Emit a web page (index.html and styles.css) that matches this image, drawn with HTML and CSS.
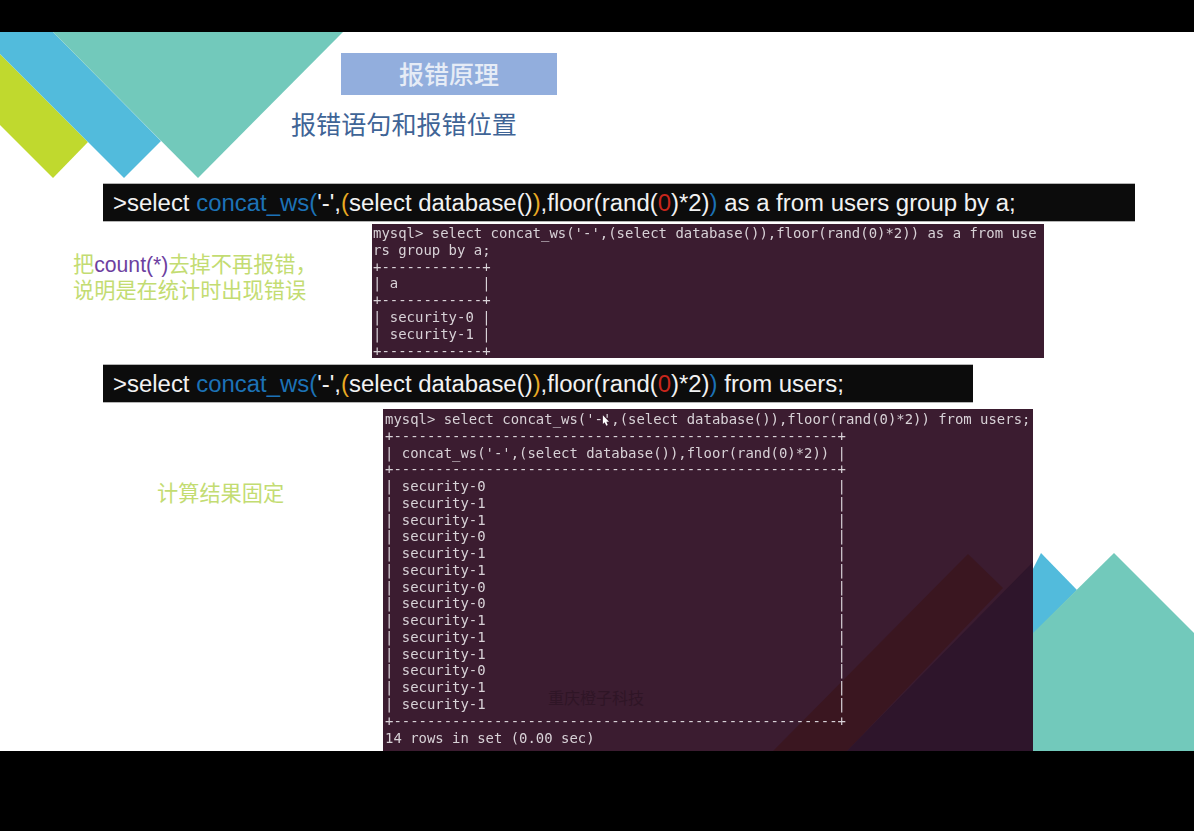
FILE: index.html
```html
<!DOCTYPE html>
<html lang="zh">
<head>
<meta charset="utf-8">
<title>报错原理</title>
<link rel="stylesheet" href="styles.css">
</head>
<body>
<main class="slide">
<svg class="decor" viewBox="0 0 1194 719" aria-hidden="true">
<polygon class="d-green" points="0,22 88,110 53,146 0,93"/>
<polygon class="d-blue" points="0,0 53,0 161,109 124,146 0,22"/>
<polygon class="d-teal" points="53,0 343,0 198,146"/>
<polygon class="d-blue" points="1041,521 1077,558 1033,602 1000,602"/>
<polygon class="d-teal" points="1114,521 1194,601 1194,719 1033,719 1033,601"/>
</svg>
<div class="title-box">报错原理</div>
<h2 class="subtitle">报错语句和报错位置</h2>
<div class="bar bar-one">&gt;select <span class="c-blue">concat_ws(</span>'-',<span class="c-orange">(</span>select database()<span class="c-orange">)</span>,floor(rand(<span class="c-red">0</span>)*2)<span class="c-blue">)</span> as a from users group by a;</div>
<section class="row row-one">
<p class="note note-one">把<span class="c-purple">count(*)</span>去掉不再报错，<br>说明是在统计时出现错误</p>
<pre class="term term-one">mysql&gt; select concat_ws('-',(select database()),floor(rand(0)*2)) as a from use
rs group by a;
+------------+
| a          |
+------------+
| security-0 |
| security-1 |
+------------+</pre>
</section>
<div class="bar bar-two">&gt;select <span class="c-blue">concat_ws(</span>'-',<span class="c-orange">(</span>select database()<span class="c-orange">)</span>,floor(rand(<span class="c-red">0</span>)*2)<span class="c-blue">)</span> from users;</div>
<section class="row row-two">
<p class="note note-two">计算结果固定</p>
<div class="term-wrap">
<svg class="term-shade" viewBox="0 0 650 342" aria-hidden="true">
<polygon class="s-red" points="585,145 620,179 464,342 390,342"/>
<polygon class="s-purple" points="650,153 650,342 464,342"/>
</svg>
<pre class="term term-two">mysql&gt; select concat_ws('-',(select database()),floor(rand(0)*2)) from users;
+-----------------------------------------------------+
| concat_ws('-',(select database()),floor(rand(0)*2)) |
+-----------------------------------------------------+
| security-0                                          |
| security-1                                          |
| security-1                                          |
| security-0                                          |
| security-1                                          |
| security-1                                          |
| security-0                                          |
| security-0                                          |
| security-1                                          |
| security-1                                          |
| security-1                                          |
| security-0                                          |
| security-1                                          |
| security-1                                          |
+-----------------------------------------------------+
14 rows in set (0.00 sec)</pre>
<svg class="cursor" viewBox="0 0 8 12" aria-hidden="true"><path d="M1 0 L1 10 L3 8 L5 12 L6.5 11 L5 7.5 L8 7.5 Z"/></svg>
<span class="watermark">重庆橙子科技</span>
</div>
</section>
</main>
</body>
</html>
```
FILE: styles.css
```css
* { box-sizing: border-box; }
html, body { margin: 0; padding: 0; background: #000; }
body { height: 831px; overflow: hidden; padding-top: 32px; font-family: "Noto Sans CJK SC", "Noto Sans", sans-serif; }
.slide { position: relative; height: 719px; background: #fff; overflow: hidden; }
.decor { position: absolute; left: 0; top: 0; width: 1194px; height: 719px; }
.d-green { fill: #c0d92e; }
.d-blue { fill: #52bbdc; }
.d-teal { fill: #72c9bb; }

.title-box, .subtitle, .bar, .row { position: relative; }
.title-box { width: 216px; height: 42px; margin: 21px 0 0 341px; background: #92aedd; color: #e6ecf6; font-size: 25px; font-weight: 500; line-height: 40px; text-align: center; }
.subtitle { margin: 0 0 42px 291px; padding-top: 10px; height: 46px; font-size: 25.1px; font-weight: 400; line-height: 36px; color: #3f6496; }

.bar { height: 39px; background: #0c0c0c; border-top: 1px solid #b5b5b5; border-bottom: 1px solid #b5b5b5; margin-left: 103px; padding-left: 10px; color: #f2f2f2; font-family: "Liberation Sans", Arial, sans-serif; font-size: 23.95px; line-height: 37px; white-space: pre; }
.bar-one { width: 1032px; }
.bar-two { width: 870px; margin-top: 6px; }
.c-blue { color: #1c72b6; }
.c-orange { color: #e9aa23; }
.c-red { color: #c8261c; }
.c-purple { color: #6d3fa0; font-family: "Liberation Sans", Arial, sans-serif; line-height: 1; }

.row { display: flex; align-items: flex-start; }
.row-one { margin-top: 2px; margin-left: 73px; }
.row-two { margin-top: 6px; margin-left: 157px; }
.note { margin: 0; flex: none; color: #c3dc72; font-size: 21.2px; line-height: 26px; white-space: pre; }
.note-one { width: 299px; margin-top: 26px; }
.note-two { width: 226px; margin-top: 70px; }

.term { margin: 0; background: #3b1c30; color: #d8d2d7; font-family: "DejaVu Sans Mono", monospace; white-space: pre; overflow: hidden; filter: blur(0.3px); }
.term-one { width: 672px; height: 134px; padding: 1px 0 0 1px; font-size: 13.96px; line-height: 16.8px; }
.term-wrap { position: relative; width: 650px; height: 342px; background: #3b1c30; }
.term-two { position: relative; width: 650px; height: 342px; padding: 2px 0 0 2px; font-size: 13.93px; line-height: 16.76px; background: transparent; }
.term-shade { position: absolute; left: 0; top: 0; width: 650px; height: 342px; }
.s-red { fill: #3a1620; }
.s-purple { fill: #2e152b; }
.cursor { position: absolute; left: 219px; top: 6px; width: 7px; height: 11px; fill: #fff; }
.watermark { position: absolute; left: 165px; top: 277px; font-size: 16px; line-height: 22px; color: #2f1526; }
```
